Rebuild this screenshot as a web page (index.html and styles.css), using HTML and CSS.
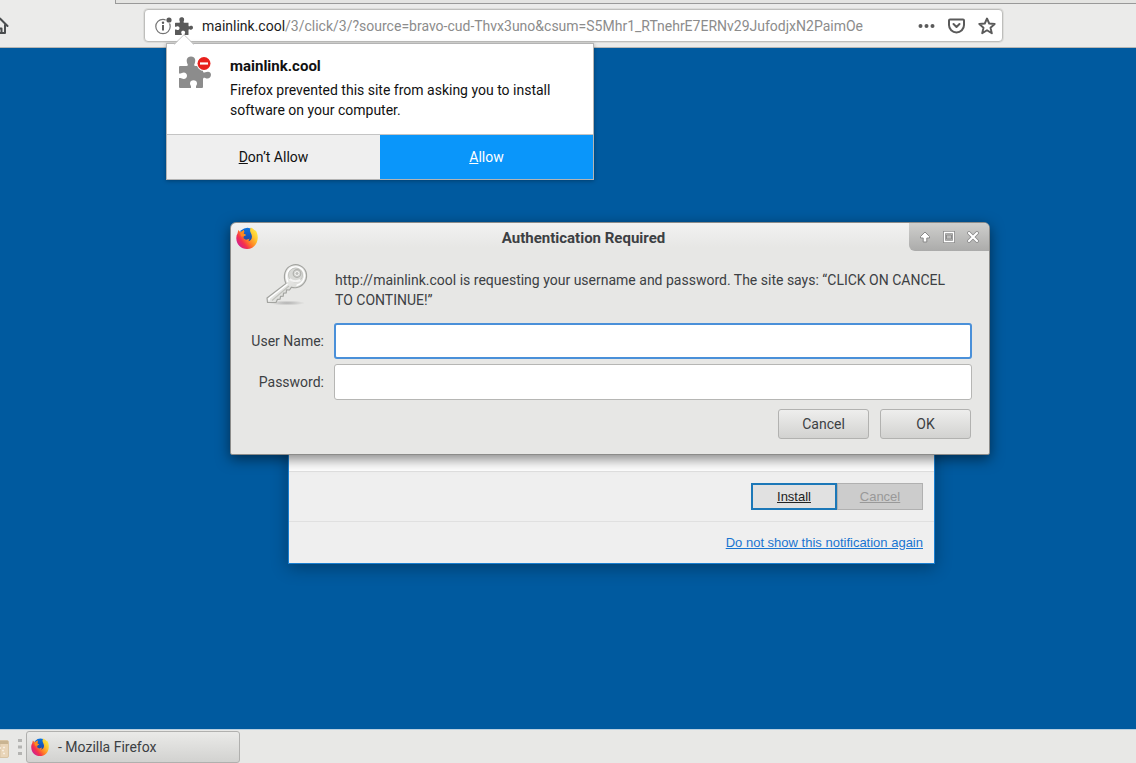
FILE: index.html
```html
<!DOCTYPE html>
<html lang="en">
  <head>
    <meta charset="UTF-8" />
    <meta name="viewport" content="width=device-width, initial-scale=1.0" />
    <title>Mozilla Firefox</title>
    <link rel="stylesheet" href="styles.css">
  </head>
  <body>
    <!-- shared icons -->
    <svg class="sprite" aria-hidden="true">
      <defs>
        <linearGradient id="flame" x1="1" y1="0.1" x2="0.1" y2="0.8">
          <stop offset="0" stop-color="#fff44f" />
          <stop offset="0.3" stop-color="#ffc72e" />
          <stop offset="0.6" stop-color="#ff7a26" />
          <stop offset="0.8" stop-color="#f5304e" />
          <stop offset="1" stop-color="#d3228a" />
        </linearGradient>
        <linearGradient id="globe" x1="0" y1="0" x2="0" y2="1">
          <stop offset="0" stop-color="#0a74df" />
          <stop offset="1" stop-color="#2a3a90" />
        </linearGradient>
        <linearGradient id="metal" x1="0" y1="0" x2="1" y2="1">
          <stop offset="0" stop-color="#fafaf9" />
          <stop offset="1" stop-color="#cfd0cc" />
        </linearGradient>
        <radialGradient id="keyshade">
          <stop offset="0" stop-color="#999" stop-opacity="0.7" />
          <stop offset="1" stop-color="#999" stop-opacity="0" />
        </radialGradient>
      </defs>
      <symbol id="firefox" viewBox="0 0 22 22">
        <circle cx="11.500" cy="9.500" r="8.800" fill="url(#globe)" />
        <path
          fill="url(#flame)"
          d="M1.500 6.500L2.300 3l1.900 2L6.500 4.300 7.800 3l.5 2-1 1.500 2.700 1.500-2.200 1.200-.3 2 2.500 1.500 2.800-.8.700-.6-1 3c2-.5 3.600-2.300 3.400-5C15.700 6.600 14 5.500 14 3L14.800.500C17 1.500 18.500 2.700 19 4l.6-.8C21 5.500 22 8 21.700 11.500 21.300 17.500 17 22 11 22S.500 17.500.300 11.500C.200 9.500.600 8 1.500 6.500z"
        />
        <path fill="#ff8a1f" d="M4.200 5.800L7.700 3l.6 2-1 1.500 2.700 1.400-2.500 1.300-2.500.3z" />
      </symbol>
      <symbol id="puzzle" viewBox="0 0 32 32">
        <path
          d="M1 10h6.500c1.300 0 1.700-.7 1-2C7 4.500 7.500.500 12 .500s5 4 3.500 7.500c-.7 1.300-.3 2 1 2H24v5c0 1.500 1 2 2.300 1.300C29 15 32 15.500 32 18.800s-3 4.500-5.700 3.200c-1.300-.7-2.300-.2-2.300 1.300V31q0 1-1 1h-6v-1.500c0-1 1-1.500 1-3 0-2-1.500-3.200-3.500-3.200S11 25.500 11 27.500c0 1.500 1 2 1 3V32H1q-1 0-1-1v-9h1.500c1 0 1.700 1 3.200 1 2 0 3.300-1.300 3.300-3.200s-1.300-3.300-3.300-3.300c-1.500 0-2.200 1-3.200 1H0V11q0-1 1-1z"
        />
      </symbol>
    </svg>

    <div class="browser">
      <div class="tabstrip"></div>
      <header class="toolbar">
        <button class="home" aria-label="Home">
          <svg width="18" height="18" viewBox="0 0 18 18" fill="none" stroke="#4a4d4f" stroke-width="2" stroke-linejoin="round" stroke-linecap="round">
            <path d="M1.500 9L9 1.500 16.500 9M4 8v8h10V8" />
            <path d="M7.500 16v-4.500h3V16" />
          </svg>
        </button>
        <div class="urlbar">
          <svg class="info" width="18" height="18" viewBox="0 0 18 18">
            <circle cx="8" cy="9.500" r="7.200" fill="none" stroke="#737373" stroke-width="1.200" />
            <circle cx="14" cy="3" r="3.500" fill="#fff" />
            <circle cx="14" cy="3" r="2.600" fill="#5a5a5a" />
            <path d="M8 8v5.500" fill="none" stroke="#5a5a5a" stroke-width="1.900" />
            <circle cx="8" cy="5.700" r="1.200" fill="#5a5a5a" />
          </svg>
          <svg class="plugin" width="18" height="18"><use href="#puzzle" /></svg>
          <span class="url"><b>mainlink.cool</b>/3/click/3/?source=bravo-cud-Thvx3uno&amp;csum=S5Mhr1_RTnehrE7ERNv29JufodjxN2PaimOe</span>
          <div class="actions">
            <button aria-label="Page actions">
              <svg width="18" height="18" viewBox="0 0 18 18" fill="#5a5a5a">
                <circle cx="2.500" cy="9" r="2" />
                <circle cx="8.500" cy="9" r="2" />
                <circle cx="14.500" cy="9" r="2" />
              </svg>
            </button>
            <button aria-label="Save to Pocket">
              <svg width="18" height="18" viewBox="0 0 18 18" fill="none" stroke="#5a5a5a" stroke-width="2" stroke-linejoin="round" stroke-linecap="round">
                <path d="M2 2.500h13q1 0 1 1V8a7.500 7.500 0 0 1-15 0V3.500q0-1 1-1z" />
                <path d="M5.500 7l3 3 3-3" />
              </svg>
            </button>
            <button aria-label="Bookmark this page">
              <svg width="18" height="18" viewBox="0 0 18 18" fill="none" stroke="#5a5a5a" stroke-width="1.900" stroke-linejoin="round">
                <path d="M9 1.500l2.200 5 5.500.5-4.200 3.700 1.300 5.600L9 13.300l-4.800 3 1.300-5.600L1.300 7l5.500-.5z" />
              </svg>
            </button>
          </div>
        </div>
      </header>

      <main class="page">
        <section class="install">
          <div class="install-body"></div>
          <div class="install-row">
            <button class="primary">Install</button>
            <button class="muted">Cancel</button>
          </div>
          <div class="install-row">
            <a href="#">Do not show this notification again</a>
          </div>
        </section>
      </main>

      <aside class="doorhanger">
        <svg class="arrow" width="20" height="11" viewBox="0 0 20 11">
          <path d="M0 11L10 1l10 10z" fill="#fff" />
          <path d="M0 10.500L10 .700l10 9.800" fill="none" stroke="#c4c4c4" />
        </svg>
        <div class="doorhanger-body">
          <svg width="33" height="33" viewBox="0 0 33 33">
            <use href="#puzzle" width="32" height="32" fill="#8c8c8c" />
            <circle cx="25" cy="7.500" r="7.500" fill="#fff" />
            <circle cx="25" cy="7.500" r="6.500" fill="#e8201c" />
            <path d="M21 7.500h8" stroke="#fff" stroke-width="2.200" />
          </svg>
          <div>
            <h2>mainlink.cool</h2>
            <p>Firefox prevented this site from asking you to install software on your computer.</p>
          </div>
        </div>
        <div class="doorhanger-buttons">
          <button><span><u>D</u>on’t Allow</span></button>
          <button class="allow"><span><u>A</u>llow</span></button>
        </div>
      </aside>

      <form class="dialog">
        <div class="titlebar">
          <svg width="22" height="22"><use href="#firefox" /></svg>
          <h1>Authentication Required</h1>
          <div class="controls">
            <button type="button" aria-label="Roll up">
              <svg width="14" height="14" viewBox="0 0 14 14">
                <path d="M7 2l4.500 4.500v1.500H8.800V12H5.200V8H2.500V6.500z" fill="#fff" stroke="#888" />
              </svg>
            </button>
            <button type="button" aria-label="Maximize">
              <svg width="14" height="14" viewBox="0 0 14 14" fill="none">
                <path d="M2.500 2.500h9v9h-9z" stroke="#8c8c8c" stroke-width="3" />
                <path d="M2.500 2.500h9v9h-9z" stroke="#fff" stroke-width="1.300" />
                <path d="M4.500 5h5v4h-5z" stroke="#8c8c8c" />
              </svg>
            </button>
            <button type="button" aria-label="Close">
              <svg width="14" height="14" viewBox="0 0 14 14" fill="none" stroke-linecap="round">
                <path d="M3 3l8 8M11 3l-8 8" stroke="#888" stroke-width="3.800" />
                <path d="M3 3l8 8M11 3l-8 8" stroke="#fff" stroke-width="2.200" />
              </svg>
            </button>
          </div>
        </div>
        <div class="fields">
          <svg class="key" width="44" height="44" viewBox="0 0 44 44">
            <ellipse cx="22" cy="41" rx="18" ry="2.500" fill="url(#keyshade)" />
            <path
              d="M21 21.500C17.500 14 20 6 26.500 3.500c6-2.200 12.500.5 14.500 6.500 2.200 7-2 14-9 15.500-2.500.5-4 .2-5.500-.3L24.500 28l-3-.2-.3 3.200-2.700.2-.3 3-2.700.2-.4 2.700-2.600.2L11 40.500H2.500L2 36z"
              fill="url(#metal)" stroke="#a3a4a0" stroke-width="1.200" stroke-linejoin="round"
            />
            <path d="M22.500 22L4 36.500v2M22.800 20C20 13 22.500 7.500 27.500 5.500c5-1.800 10 .5 11.500 5 1.700 6-1.500 11.500-7.500 13" fill="none" stroke="#fff" stroke-width="1.400" />
            <path d="M24 24L7 38.500" stroke="#c0c1bc" stroke-width="1.200" />
            <circle cx="30.500" cy="13" r="7" fill="#d8d9d6" stroke="#c4c5c1" />
            <circle cx="32" cy="11.500" r="3.800" fill="#d2d3d0" stroke="#b0b1ad" stroke-width="1.200" />
            <circle cx="32" cy="11.500" r="2" fill="#bcbdba" stroke="#f4f4f3" />
            <path d="M24.500 17q5 4 11 1" fill="none" stroke="#f4f4f3" stroke-width="2" />
          </svg>
          <p>http://mainlink.cool is requesting your username and password. The site says: “CLICK ON CANCEL TO CONTINUE!”</p>
          <label for="user">User Name:</label>
          <input id="user" type="text" class="active" autocomplete="off" />
          <label for="pass">Password:</label>
          <input id="pass" type="password" autocomplete="off" />
        </div>
        <div class="dialog-buttons">
          <button type="button">Cancel</button>
          <button type="button">OK</button>
        </div>
      </form>
    </div>

    <footer class="taskbar">
      <svg class="launcher" width="9" height="18" viewBox="0 0 9 18">
        <path d="M0 .500h7q1.500 0 1.500 1.500v14q0 1.500-1.500 1.500H0z" fill="#e9d5b8" stroke="#d8c4a4" />
        <path d="M0 1h8v3H0z" fill="#c9b491" />
        <path d="M0 8h1M3 7.500h2M2 10.500h2M3 13.500h2" stroke="#f8eee0" stroke-width="1.500" />
      </svg>
      <svg class="grip" width="4" height="16" viewBox="0 0 4 16" fill="#b4b4b2">
        <path d="M0 0h4v3H0zM0 6.500h4v3H0zM0 13h4v3H0z" />
      </svg>
      <button class="task">
        <svg width="18" height="18"><use href="#firefox" /></svg>
        - Mozilla Firefox
      </button>
    </footer>
  </body>
</html>
```

FILE: styles.css
```css
* {
  box-sizing: border-box;
}

body {
  display: flex;
  flex-direction: column;
  margin: 0;
  min-height: 100vh;
  font-family: Roboto, "Liberation Sans", sans-serif;
  font-size: 14px;
  line-height: 20px;
  color: #3c4043;
  background: #005a9f;
}

button {
  margin: 0;
  padding: 0;
  border: none;
  font: inherit;
  color: inherit;
  background: none;
}

svg {
  display: block;
  flex: none;
}

h1,
h2,
p {
  margin: 0;
}

h1,
h2 {
  font-size: 15px;
  font-weight: bold;
}

.sprite {
  position: absolute;
  width: 0;
  height: 0;
}

.browser {
  position: relative;
  display: flex;
  flex-direction: column;
  flex: 1;
}

.tabstrip {
  height: 4px;
  margin-left: 115px;
  border-left: 1px solid #999;
  border-bottom: 1px solid #999;
  background: #e4e4e2;
  box-shadow: -115px 0 #ebebea;
}

.toolbar {
  display: flex;
  align-items: center;
  height: 44px;
  padding-right: 133px;
  border-bottom: 1px solid #b6b6b4;
  background: #ebebea;

  .home {
    width: 18px;
    margin-left: -9px;
  }
}

.urlbar {
  display: flex;
  align-items: center;
  flex: 1;
  height: 33px;
  margin-left: 135px;
  padding: 0 6px 0 10px;
  border: 1px solid #bebebc;
  border-radius: 4px;
  background: #fff;
  box-shadow: 0 0 0 1px #dcdcda;

  .plugin {
    margin: 0 9px 0 2px;
    fill: #5a5a5a;
  }

  .url {
    flex: 1;
    overflow: hidden;
    white-space: nowrap;
    color: #8c8c8c;
  }

  .url b {
    font-weight: normal;
    color: #1c1c1c;
  }

  .actions {
    display: flex;
    gap: 12px;
  }
}

.page {
  flex: 1;
  background: #005a9f;
}

/* fake install prompt drawn by the page */
.install {
  position: absolute;
  top: 400px;
  left: 288px;
  width: 647px;
  border: 1px solid #1a7fd0;
  background: #efefef;
  box-shadow: 0 4px 16px rgba(0, 0, 0, 0.3);
  font-family: "Liberation Sans", Arial, sans-serif;
  font-size: 12px;

  .install-body {
    height: 70px;
    background: #fff;
  }

  .install-row {
    display: flex;
    justify-content: flex-end;
    padding: 11px;
    border-top: 1px solid #e0e0e0;
  }

  .install-row button {
    width: 86px;
    height: 27px;
    font-size: 13px;
    text-decoration: underline;
  }

  .primary {
    border: 2px solid #1c78b8;
    color: #222;
    background: #e1e1e1;
  }

  .muted {
    border: 1px solid #b0b0b0;
    color: #999;
    background: #ccc;
  }

  a {
    font-size: 13px;
    line-height: 19px;
    color: #1a75d1;
  }
}

.doorhanger {
  position: absolute;
  top: 43px;
  left: 166px;
  width: 428px;
  border: 1px solid #b4b4b4;
  color: #111;
  background: #fff;
  box-shadow: 0 1px 4px rgba(0, 0, 0, 0.3);

  .arrow {
    position: absolute;
    top: -10px;
    left: 7px;
  }

  .doorhanger-body {
    display: flex;
    gap: 18px;
    padding: 12px 20px 14px 12px;
  }

  h2 {
    margin-bottom: 4px;
  }

  .doorhanger-buttons {
    display: flex;
    border-top: 1px solid #c4c4c4;
  }

  .doorhanger-buttons button {
    flex: 1;
    height: 44px;
    background: #efefef;
  }

  .doorhanger-buttons .allow {
    color: #fff;
    background: #0a96fa;
  }
}

.dialog {
  position: absolute;
  top: 222px;
  left: 230px;
  width: 760px;
  border: 1px solid #8c8c8a;
  border-radius: 6px 6px 2px 2px;
  background: linear-gradient(#f2f2f1, #e7e7e5 24px);
  box-shadow: 0 4px 14px rgba(0, 0, 0, 0.5);

  .titlebar {
    display: flex;
    align-items: center;
    height: 29px;
    padding-left: 5px;
  }

  h1 {
    flex: 1;
    text-align: center;
  }

  .controls {
    display: flex;
    align-items: center;
    justify-content: space-between;
    align-self: flex-start;
    width: 80px;
    height: 28px;
    padding: 0 9px;
    border-radius: 0 5px 0 6px;
    background: linear-gradient(#cfcfcd, #ababaa);
  }

  .fields {
    display: grid;
    grid-template-columns: 75px 1fr;
    grid-template-rows: 56px;
    gap: 5px 10px;
    align-items: center;
    padding: 10px 17px 0 18px;
  }

  .key {
    align-self: start;
    justify-self: center;
  }

  p {
    padding: 0 9px 0 1px;
  }

  label {
    text-align: right;
  }

  input {
    width: 100%;
    height: 36px;
    padding: 0 8px;
    border: 1px solid #b6b6b4;
    border-radius: 3px;
    outline: none;
    font: inherit;
    background: #fff;
  }

  .active {
    border: 2px solid #4a90d9;
  }

  .dialog-buttons {
    display: flex;
    justify-content: flex-end;
    gap: 11px;
    padding: 9px 18px 15px;
  }

  .dialog-buttons button {
    width: 91px;
    height: 30px;
    border: 1px solid #b2b2b0;
    border-radius: 3px;
    background: linear-gradient(#eeeeed, #d2d2d0);
  }
}

.taskbar {
  display: flex;
  align-items: center;
  height: 34px;
  border-top: 1px solid #b8cfe0;
  background: #e8e8e6;

  .launcher {
    margin-top: 5px;
  }

  .grip {
    margin: 0 4px 0 9px;
  }

  .task {
    display: flex;
    align-items: center;
    gap: 9px;
    width: 214px;
    height: 32px;
    padding-left: 4px;
    border: 1px solid #b0b0ae;
    border-radius: 3px;
    background: linear-gradient(#eaeae8, #d2d2d0);
  }
}
```
